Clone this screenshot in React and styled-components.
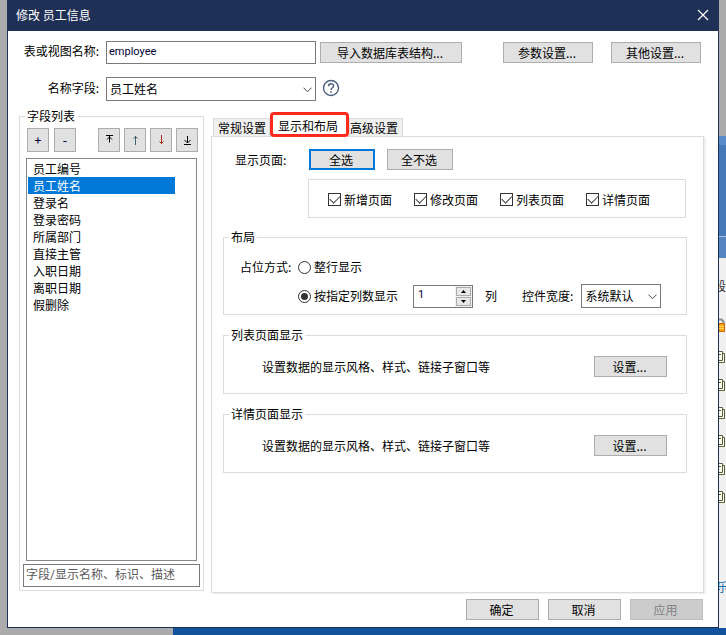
import { useState } from "react";
import styled, { createGlobalStyle } from "styled-components";

const GlobalStyle = createGlobalStyle`
  * {
    box-sizing: border-box;
  }

  body {
    margin: 0;
    background-color: #ababab;
  }

  body, button, input, select {
    font-family: "Noto Sans CJK SC", sans-serif;
    font-size: 12px;
    line-height: 16px;
    color: #000000;
  }
`;

const Desktop = styled.div`
  display: grid;
  grid-template-columns: 7px minmax(0, 1fr) 7px;
  grid-template-rows: minmax(0, 1fr) 7px;
  min-height: 100vh;
`;

const Taskbar = styled.div`
  grid-column: 1 / -1;
  grid-row: 2;
  margin-left: 173px;
  background-color: #10529c;
`;

const Backdrop = styled.aside`
  grid-column: 3;
  grid-row: 1;
  display: flex;
  flex-direction: column;
  overflow: hidden;
`;

const BackdropBanner = styled.div`
  height: 122px;
  flex: none;
  margin-top: 136px;
  border-top: 9px solid #5a8ccb;
  background: linear-gradient(#4679b9 91px, #a6c0e0 91px, #a6c0e0 92px, #5583bf 92px);
`;

const BackdropTree = styled.div`
  flex: 1;
  display: flex;
  flex-direction: column;
  padding-top: 20px;
  background-color: #f0f0f0;
`;

const BackdropText = styled.span`
  display: flex;
  justify-content: ${(props) => props.$align};
  width: 7px;
  color: ${(props) => props.$color};
  margin-bottom: ${(props) => props.$gap};
`;

const TreeIcons = styled.div`
  display: grid;
  gap: 16px;
  margin: 19px 0 76px;

  svg {
    display: block;
  }
`;

const Dialog = styled.main`
  grid-column: 2;
  grid-row: 1;
  display: flex;
  flex-direction: column;
  border: 1px solid #1f3056;
  border-top: 0;
  background-color: #ffffff;
`;

const TitleBar = styled.header`
  display: flex;
  align-items: center;
  justify-content: space-between;
  height: 31px;
  padding: 0 9px 1px 8px;
  background-color: #1f3056;
`;

const Title = styled.h1`
  margin: 0;
  font-size: 12px;
  font-weight: normal;
  color: #ffffff;
`;

const CloseButton = styled.button`
  display: flex;
  padding: 0;
  border: 0;
  background: none;
  cursor: pointer;
`;

const Form = styled.div`
  display: grid;
  gap: 13px;
  padding: 10px 17px 0 11px;
`;

const FormRow = styled.div`
  display: flex;
  align-items: center;
`;

const FormLabel = styled.label`
  width: 80px;
  margin-right: 7px;
  padding-bottom: 3px;
  text-align: right;
  white-space: nowrap;
`;

const TextInput = styled.input`
  flex: 0 1 210px;
  min-width: 0;
  height: 23px;
  padding: 0 2px 2px;
  border: 1px solid #7a7a7a;
  background-color: #ffffff;
  font-family: Roboto, "Noto Sans CJK SC", sans-serif;
  font-size: 11px;
  color: #000033;
`;

const SearchInput = styled(TextInput)`
  flex: none;
  margin: 3px 3px 3px;
  font-size: 12px;

  &::placeholder {
    color: #5a5a5a;
    opacity: 1;
  }
`;

const SelectBox = styled.div`
  position: relative;
  flex: 0 1 ${(props) => props.$width};

  svg {
    position: absolute;
    top: 10px;
    right: 4px;
    pointer-events: none;
  }
`;

const StyledSelect = styled.select`
  display: block;
  appearance: none;
  width: 100%;
  height: 24px;
  padding: 0 18px 0 3px;
  border: 1px solid #7a7a7a;
  border-radius: 0;
  background-color: #ffffff;
`;

const HelpButton = styled.button`
  display: flex;
  margin-left: 6px;
  padding: 0 0 2px;
  border: 0;
  background: none;
  cursor: pointer;
`;

const Button = styled.button`
  flex: none;
  width: ${(props) => props.$width || "73px"};
  height: 21px;
  padding: 0 2px 0 0;
  border: ${(props) => (props.$primary ? "2px solid #0078d7" : "1px solid #adadad")};
  background-color: #e1e1e1;
  cursor: pointer;

  &:disabled {
    border-color: #bfbfbf;
    background-color: #cccccc;
    color: #838383;
    cursor: default;
  }
`;

const ButtonGroup = styled.div`
  display: flex;
  gap: ${(props) => props.$gap};
  margin-left: ${(props) => (props.$end ? "auto" : "0")};
`;

const Body = styled.div`
  flex: 1;
  display: flex;
  gap: 7px;
  padding: 7px 14px 0 11px;
`;

const Group = styled.fieldset`
  min-width: 0;
  margin: 0;
  padding: 0;
  border: 1px solid #dcdcdc;
`;

const Legend = styled.legend`
  margin-left: 5px;
  padding: 0 2px;
`;

const FieldList = styled(Group)`
  flex: 0 0 185px;
  display: flex;
  flex-direction: column;
  margin-bottom: 2px;
`;

const ListTools = styled.div`
  display: flex;
  padding: 4px 5px 6px 7px;
`;

const ToolButton = styled.button`
  display: flex;
  align-items: center;
  justify-content: center;
  width: 22px;
  height: 24px;
  padding: 0;
  border: 1px solid #adadad;
  background-color: #e1e1e1;
  color: #000033;
  font-weight: 500;
  cursor: pointer;
`;

const ListBox = styled.ul`
  flex: 1;
  margin: 0 6px;
  padding: 1px;
  border: 1px solid #828790;
  list-style: none;
`;

const ListItem = styled.li`
  height: 17px;
  margin-right: 20px;
  padding-left: 5px;
  line-height: 17px;
  background-color: ${(props) => (props.$selected ? "#0078d7" : "transparent")};
  color: ${(props) => (props.$selected ? "#ffffff" : "#000000")};
  cursor: default;
`;

const Settings = styled.section`
  flex: 1;
  min-width: 0;
  display: flex;
  flex-direction: column;
  padding-top: 4px;
`;

const Tabs = styled.div`
  display: flex;
  align-items: flex-end;
  height: 24px;
  padding-left: 2px;
`;

const Tab = styled.button`
  height: 18px;
  padding: ${(props) => props.$padding};
  border: 1px solid #dcdcdc;
  border-bottom: 0;
  background-color: #f0f0f0;
  white-space: nowrap;
  cursor: pointer;
`;

const ActiveTab = styled(Tab)`
  z-index: 1;
  height: 25px;
  margin-bottom: -1px;
  border: 3px solid #ff2a1c;
  border-radius: 4px;
  background-color: #ffffff;
`;

const TabPanel = styled.div`
  flex: 1;
  padding: 12px 16px 0 11px;
  border: 1px solid #dcdcdc;
  box-shadow: 2px 1px #f0f0f0;
`;

const PageRow = styled.div`
  display: flex;
  align-items: center;
  gap: 12px;
  padding-left: 12px;
`;

const RowLabel = styled.span`
  width: 62px;
`;

const PageChecks = styled.div`
  display: flex;
  align-items: center;
  gap: 22px;
  height: 39px;
  margin: 9px 1px 11px 85px;
  padding: 2px 0 0 19px;
  border: 1px solid #dcdcdc;
`;

const OptionLabel = styled.label`
  display: flex;
  align-items: center;
  gap: 3px;
  white-space: nowrap;
`;

const Checkbox = styled.input`
  appearance: none;
  display: grid;
  place-items: center;
  width: 13px;
  height: 13px;
  margin: 0;
  border: 1px solid #333333;

  &:checked::before {
    content: "";
    width: 9px;
    height: 5px;
    margin-bottom: 3px;
    border: solid #444444;
    border-width: 0 0 1px 1px;
    transform: rotate(-45deg);
  }
`;

const Radio = styled.input`
  appearance: none;
  display: grid;
  place-items: center;
  width: 13px;
  height: 13px;
  margin: 0;
  border: 1px solid #333333;
  border-radius: 50%;

  &:checked::before {
    content: "";
    width: 7px;
    height: 7px;
    border-radius: 50%;
    background-color: #333333;
  }
`;

const LayoutGrid = styled.div`
  display: grid;
  grid-template-columns: 52px 1fr;
  column-gap: 6px;
  row-gap: 9px;
  padding: 14px 0 6px 16px;
`;

const LayoutRow = styled.div`
  grid-column: 2;
  display: flex;
  align-items: center;
`;

const Spinner = styled.div`
  display: flex;
  width: 60px;
  height: 23px;
  margin: 0 12px 0 15px;
  border: 1px solid #7a7a7a;
`;

const SpinnerInput = styled.input`
  flex: 1;
  min-width: 0;
  padding: 0 0 2px 4px;
  border: 0;
  font-family: Roboto, sans-serif;
  font-size: 11px;
  color: #000033;
`;

const SpinnerButtons = styled.div`
  display: grid;
  gap: 1px;
  width: 17px;
  padding: 1px;
  background-color: #f0f0f0;
`;

const SpinnerButton = styled.button`
  display: flex;
  align-items: center;
  justify-content: center;
  padding: 0;
  border: 1px solid #adadad;
  background-color: #e8e8e8;
`;

const WidthLabel = styled.label`
  margin: 0 8px 0 25px;
`;

const StyleGroup = styled(Group)`
  margin-top: 12px;
`;

const StyleRow = styled.div`
  display: flex;
  align-items: center;
  justify-content: space-between;
  padding: 13px 19px 16px 38px;
`;

const Footer = styled.footer`
  display: flex;
  justify-content: flex-end;
  gap: 9px;
  padding: 6px 15px 7px;
`;

const FIELDS = [
  "员工编号",
  "员工姓名",
  "登录名",
  "登录密码",
  "所属部门",
  "直接主管",
  "入职日期",
  "离职日期",
  "假删除",
];

const PAGES = ["新增页面", "修改页面", "列表页面", "详情页面"];

const Chevron = () => (
  <svg width="9" height="6" viewBox="0 0 9 6" fill="none" stroke="#444444">
    <path d="M0.5 0.7 4.5 4.7 8.5 0.7" />
  </svg>
);

const ARROWS = {
  top: { d: "M2 1.5H9M5.5 8.5V2M3 5.5 5.5 3 8 5.5", color: "#000000" },
  up: { d: "M5.5 11V2M3.5 4.5 5.5 2.5 7.5 4.5", color: "#3f6268" },
  down: { d: "M5.5 1V10M3.5 7.5 5.5 9.5 7.5 7.5", color: "#a02a1a" },
  bottom: { d: "M2 10.5H9M5.5 2V9M2.5 6 5.5 9 8.5 6", color: "#000000" },
};

const ArrowIcon = ({ name }) => (
  <svg width="11" height="13" viewBox="0 0 11 13" fill="none" stroke={ARROWS[name].color}>
    <path d={ARROWS[name].d} />
  </svg>
);

const DocIcon = () => (
  <svg width="7" height="12" viewBox="0 0 7 12" fill="#fffff0" stroke="#5a5a3c">
    <path d="M2 2.5H5.5V11.5H0" />
    <path d="M0 0.5H3.5V9.5H0M0 3.5H2" />
  </svg>
);

const LockIcon = () => (
  <svg width="7" height="14" viewBox="0 0 7 14">
    <path d="M0 1.5H2.5L4.5 3.5V7" fill="none" stroke="#8a8f96" strokeWidth="2" />
    <path d="M0 5.5H5.5V13.5H0Z" fill="#f9a61a" stroke="#c86a08" />
    <path d="M0 8.5H5M0 10.5H5" stroke="#ffd75a" />
  </svg>
);

const StyleSetting = ({ title }) => (
  <StyleGroup>
    <Legend>{title}</Legend>
    <StyleRow>
      <span>设置数据的显示风格、样式、链接子窗口等</span>
      <Button>设置...</Button>
    </StyleRow>
  </StyleGroup>
);

const App = () => {
  const [selected, setSelected] = useState("员工姓名");
  const [pages, setPages] = useState(PAGES);
  const [mode, setMode] = useState("columns");
  const [columns, setColumns] = useState(1);

  const togglePage = (page) =>
    setPages(pages.includes(page) ? pages.filter((p) => p !== page) : [...pages, page]);

  return (
    <Desktop>
      <GlobalStyle />
      <Dialog>
        <TitleBar>
          <Title>修改 员工信息</Title>
          <CloseButton aria-label="关闭">
            <svg width="12" height="12" viewBox="0 0 12 12" stroke="#ffffff" strokeWidth="1.2">
              <path d="M1 1 11 11M11 1 1 11" />
            </svg>
          </CloseButton>
        </TitleBar>

        <Form>
          <FormRow>
            <FormLabel htmlFor="tableName">表或视图名称:</FormLabel>
            <TextInput id="tableName" defaultValue="employee" />
            <ButtonGroup $gap="4px">
              <span />
              <Button $width="142px">导入数据库表结构...</Button>
            </ButtonGroup>
            <ButtonGroup $gap="18px" $end>
              <Button $width="90px">参数设置...</Button>
              <Button $width="90px">其他设置...</Button>
            </ButtonGroup>
          </FormRow>
          <FormRow>
            <FormLabel htmlFor="nameField">名称字段:</FormLabel>
            <SelectBox $width="210px">
              <StyledSelect id="nameField" defaultValue="员工姓名">
                {FIELDS.map((field) => (
                  <option key={field}>{field}</option>
                ))}
              </StyledSelect>
              <Chevron />
            </SelectBox>
            <HelpButton aria-label="帮助">
              <svg width="18" height="18" viewBox="0 0 18 18" fill="none" stroke="#4d6082">
                <circle cx="9" cy="9" r="7.5" strokeWidth="1.4" />
                <path d="M6.5 7.2C6.5 4 11.6 4 11.6 6.9 11.6 8.8 9 8.8 9 11" strokeWidth="1.5" />
                <path d="M9 12.2V13.8" strokeWidth="1.6" />
              </svg>
            </HelpButton>
          </FormRow>
        </Form>

        <Body>
          <FieldList>
            <Legend>字段列表</Legend>
            <ListTools>
              <ButtonGroup $gap="5px">
                <ToolButton>+</ToolButton>
                <ToolButton>-</ToolButton>
              </ButtonGroup>
              <ButtonGroup $gap="4px" $end>
                {Object.keys(ARROWS).map((name) => (
                  <ToolButton key={name} aria-label={name}>
                    <ArrowIcon name={name} />
                  </ToolButton>
                ))}
              </ButtonGroup>
            </ListTools>
            <ListBox role="listbox" aria-label="字段列表">
              {FIELDS.map((field) => (
                <ListItem
                  key={field}
                  role="option"
                  aria-selected={field === selected}
                  $selected={field === selected}
                  onClick={() => setSelected(field)}
                >
                  {field}
                </ListItem>
              ))}
            </ListBox>
            <SearchInput aria-label="搜索字段" placeholder="字段/显示名称、标识、描述" />
          </FieldList>

          <Settings>
            <Tabs role="tablist">
              <Tab role="tab" $padding="0 3px 0 4px">常规设置</Tab>
              <ActiveTab role="tab" aria-selected $padding="2px 8px 0 5px">
                显示和布局
              </ActiveTab>
              <Tab role="tab" $padding="0 4px 0 0">高级设置</Tab>
            </Tabs>
            <TabPanel role="tabpanel">
              <PageRow>
                <RowLabel>显示页面:</RowLabel>
                <Button $width="66px" $primary onClick={() => setPages(PAGES)}>
                  全选
                </Button>
                <Button $width="66px" onClick={() => setPages([])}>
                  全不选
                </Button>
              </PageRow>
              <PageChecks>
                {PAGES.map((page) => (
                  <OptionLabel key={page}>
                    <Checkbox
                      type="checkbox"
                      checked={pages.includes(page)}
                      onChange={() => togglePage(page)}
                    />
                    {page}
                  </OptionLabel>
                ))}
              </PageChecks>

              <Group>
                <Legend>布局</Legend>
                <LayoutGrid>
                  <span>占位方式:</span>
                  <LayoutRow>
                    <OptionLabel>
                      <Radio
                        type="radio"
                        name="mode"
                        checked={mode === "row"}
                        onChange={() => setMode("row")}
                      />
                      整行显示
                    </OptionLabel>
                  </LayoutRow>
                  <LayoutRow>
                    <OptionLabel>
                      <Radio
                        type="radio"
                        name="mode"
                        checked={mode === "columns"}
                        onChange={() => setMode("columns")}
                      />
                      按指定列数显示
                    </OptionLabel>
                    <Spinner>
                      <SpinnerInput
                        aria-label="列数"
                        value={columns}
                        onChange={(e) => setColumns(Number(e.target.value) || 1)}
                      />
                      <SpinnerButtons>
                        <SpinnerButton aria-label="增加" onClick={() => setColumns(columns + 1)}>
                          <svg width="5" height="3" viewBox="0 0 5 3">
                            <path d="M0 3 2.5 0 5 3Z" />
                          </svg>
                        </SpinnerButton>
                        <SpinnerButton
                          aria-label="减少"
                          onClick={() => setColumns(Math.max(1, columns - 1))}
                        >
                          <svg width="5" height="3" viewBox="0 0 5 3">
                            <path d="M0 0 2.5 3 5 0Z" />
                          </svg>
                        </SpinnerButton>
                      </SpinnerButtons>
                    </Spinner>
                    <span>列</span>
                    <WidthLabel htmlFor="controlWidth">控件宽度:</WidthLabel>
                    <SelectBox $width="80px">
                      <StyledSelect id="controlWidth">
                        <option>系统默认</option>
                      </StyledSelect>
                      <Chevron />
                    </SelectBox>
                  </LayoutRow>
                </LayoutGrid>
              </Group>

              <StyleSetting title="列表页面显示" />
              <StyleSetting title="详情页面显示" />
            </TabPanel>
          </Settings>
        </Body>

        <Footer>
          <Button>确定</Button>
          <Button>取消</Button>
          <Button disabled>应用</Button>
        </Footer>
      </Dialog>

      <Backdrop aria-hidden="true">
        <BackdropBanner />
        <BackdropTree>
          <BackdropText $color="#333333" $gap="24px" $align="flex-end">段</BackdropText>
          <LockIcon />
          <TreeIcons>
            {[1, 2, 3, 4, 5, 6].map((row) => (
              <DocIcon key={row} />
            ))}
          </TreeIcons>
          <BackdropText $color="#0f6aa8" $gap="0" $align="center">乐</BackdropText>
        </BackdropTree>
      </Backdrop>
      <Taskbar />
    </Desktop>
  );
};

export default App;
